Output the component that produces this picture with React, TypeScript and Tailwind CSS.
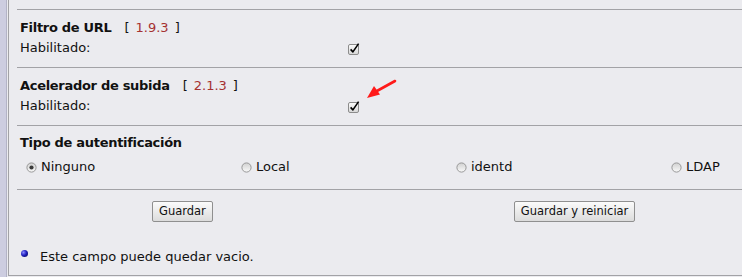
import React from 'react'

const font = { fontFamily: '"DejaVu Sans", Verdana, sans-serif' }

function CheckBox() {
  return (
    <svg width="13" height="13" viewBox="0 0 13 13" className="block">
      <defs>
        <linearGradient id="cbg" x1="0" y1="0" x2="0" y2="1">
          <stop offset="0" stopColor="#fdfdfd" />
          <stop offset="1" stopColor="#d6d6d6" />
        </linearGradient>
      </defs>
      <rect x="1.5" y="2.5" width="10" height="10" rx="1.5" fill="url(#cbg)" stroke="#8c8c8c" />
      <path d="M3.6 7.4 L5.9 9.9 L11.6 1.6" fill="none" stroke="#000" strokeWidth="1.6" strokeLinejoin="round" />
    </svg>
  )
}

function Radio({ checked }: { checked?: boolean }) {
  return (
    <svg width="11" height="11" viewBox="0 0 11 11" className="block">
      <defs>
        <linearGradient id={checked ? 'rg1' : 'rg0'} x1="0" y1="0" x2="0" y2="1">
          <stop offset="0" stopColor="#d0d0d0" />
          <stop offset="1" stopColor="#fafafa" />
        </linearGradient>
      </defs>
      <circle cx="5.5" cy="5.5" r="4.6" fill={`url(#${checked ? 'rg1' : 'rg0'})`} stroke="#8e8e8e" strokeWidth="0.9" />
      {checked && <circle cx="5.5" cy="5.5" r="2.1" fill="#3a3a3a" />}
    </svg>
  )
}

function Section({ title, version }: { title: string; version: string }) {
  return (
    <div className="border-t border-[#a2a2a6] px-[3px] pt-[8px] pb-[9px]">
      <div className="flex h-[20px] items-center">
        <span className="font-bold tracking-[-0.3px]">{title}</span>
        <span className="ml-[13px]">[</span>
        <span className="ml-[6px] text-[#a53232]">{version}</span>
        <span className="ml-[6px]">]</span>
      </div>
      <div className="flex h-[20px] items-center">
        <span className="w-[327px]">Habilitado:</span>
        <CheckBox />
      </div>
    </div>
  )
}

const btnCls =
  'h-[21px] rounded-[2px] border border-[#8f8f8f] bg-gradient-to-b from-[#fbfbfb] to-[#dcdcdc] px-[6px] text-[11.5px] leading-none text-[#111]'

export default function App() {
  return (
    <div className="relative flex h-[277px] w-[742px] overflow-hidden bg-[#ebebef] text-[13px] text-[#111]" style={font}>
      <div className="w-[7px] shrink-0 border-r border-[#b3b3c6] bg-[#cdcde0]" />
      <div className="w-[1px] shrink-0" />
      <div className="flex h-[276px] flex-1 flex-col border-b border-l border-[#a2a2a6] pl-[8px] pt-[9px]">
        <Section title="Filtro de URL" version="1.9.3" />
        <Section title="Acelerador de subida" version="2.1.3" />

        <div className="border-t border-[#a2a2a6] px-[3px] pt-[7px] pb-[12px]">
          <div className="flex h-[20px] items-center font-bold tracking-[-0.3px]">Tipo de autentificación</div>
          <div className="mt-[4px] grid h-[20px] grid-cols-[215px_215px_215px_auto] items-center pl-[6px]">
            {[
              ['Ninguno', true],
              ['Local', false],
              ['identd', false],
              ['LDAP', false],
            ].map(([label, checked]) => (
              <label key={label as string} className="flex items-center gap-[4px]">
                <Radio checked={checked as boolean} />
                <span>{label as string}</span>
              </label>
            ))}
          </div>
        </div>

        <div className="flex-1 border-t border-[#a2a2a6] pt-[11px]">
          <div className="flex">
            <button className={btnCls + ' ml-[135px]'}>Guardar</button>
            <button className={btnCls + ' ml-[301px]'}>Guardar y reiniciar</button>
          </div>
          <div className="mt-[25px] flex h-[20px] items-center pl-[4px]">
            <span className="mb-[8px] block h-[7px] w-[7px] rounded-full bg-[radial-gradient(circle_at_35%_35%,#8a8aff_0%,#2020c0_45%,#000040_100%)]" />
            <span className="ml-[12px]">Este campo puede quedar vacio.</span>
          </div>
        </div>
      </div>

      <svg className="pointer-events-none absolute left-[360px] top-[76px]" width="40" height="26" viewBox="0 0 40 26">
        <path d="M35 5 L16 15.5" stroke="#ff1a1a" strokeWidth="2.6" strokeLinecap="round" />
        <path d="M7 22 L14 10 L20 18.5 Z" fill="#ff1a1a" />
      </svg>
    </div>
  )
}
